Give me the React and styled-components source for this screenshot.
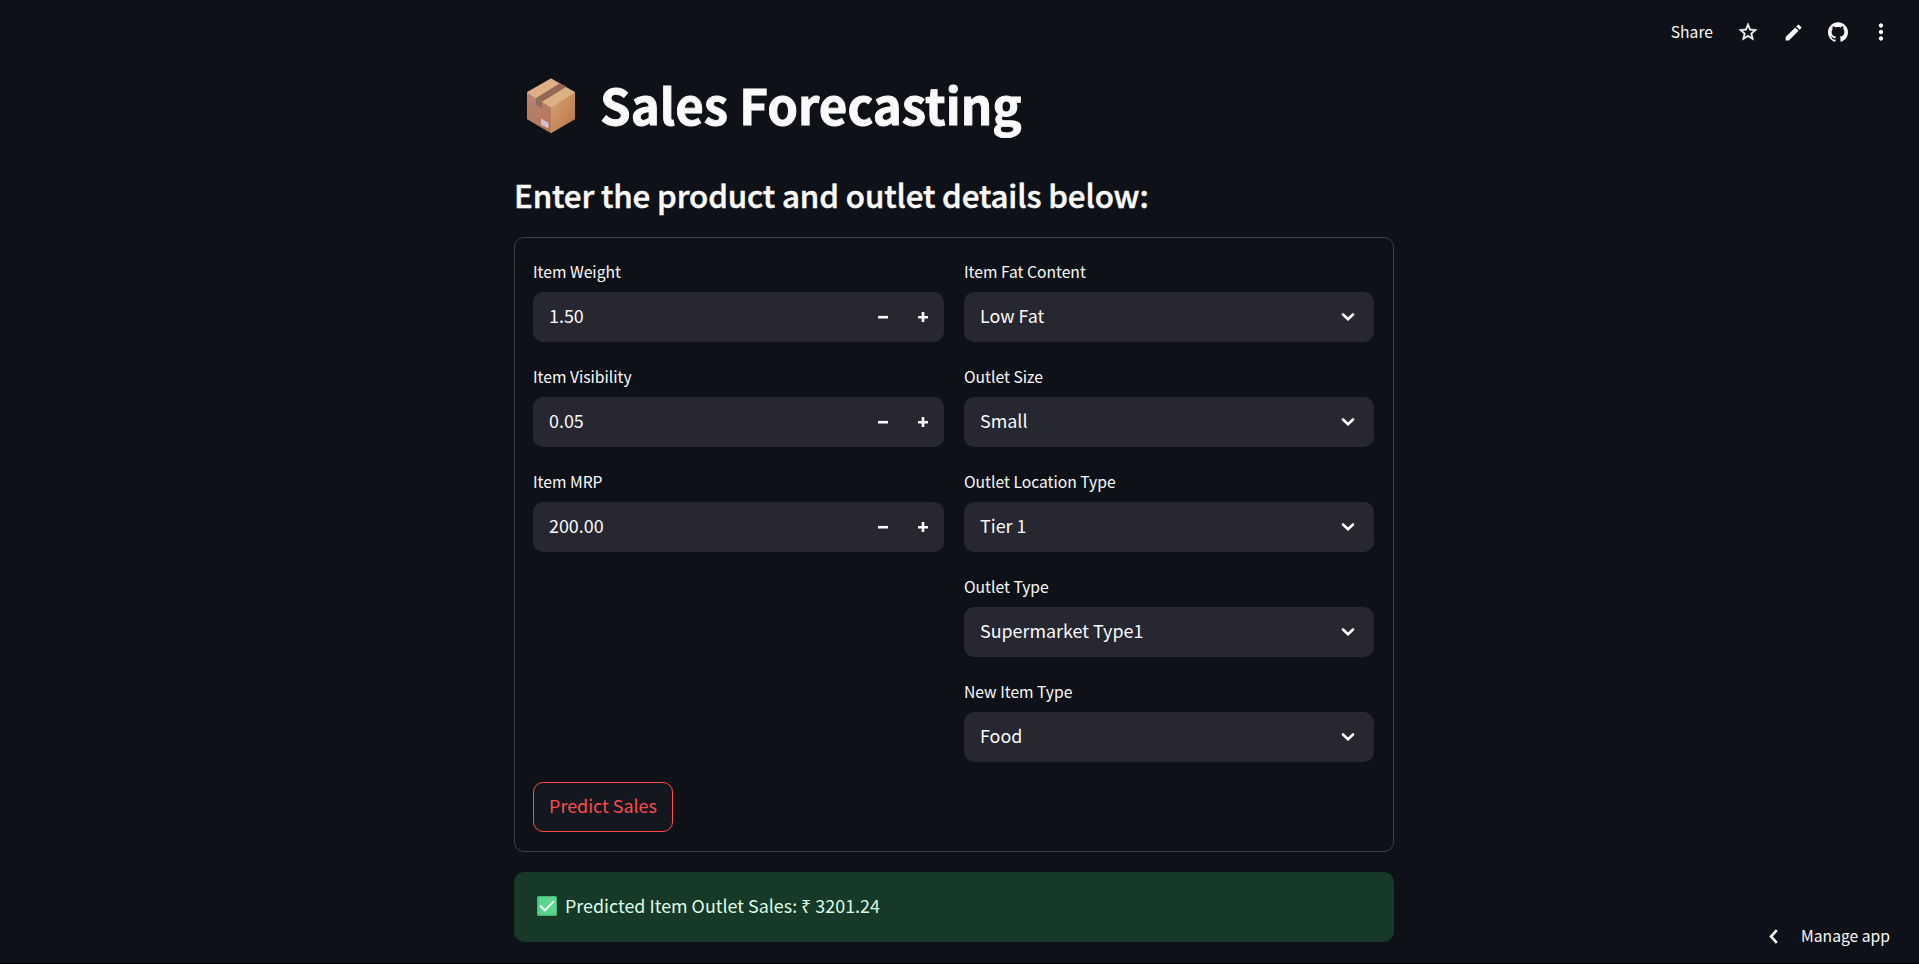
import React from "react";
import styled, { createGlobalStyle } from "styled-components";
import { MdEdit, MdMoreVert } from "react-icons/md";
import { SiGithub } from "react-icons/si";

const GlobalStyle = createGlobalStyle`
  * { box-sizing: border-box; }
  body {
    margin: 0;
    background: #0e1117;
    color: #fafafa;
    font-family: "Noto Sans CJK SC", "Noto Sans", sans-serif;
    overflow: hidden;
  }
`;

const Page = styled.div`
  display: flex;
  flex-direction: column;
  height: 964px;
  position: relative;
  border-bottom: 1px solid #000;
`;

const Toolbar = styled.header`
  display: flex;
  justify-content: flex-end;
  align-items: center;
  height: 64px;
  padding-right: 7px;
`;

const ToolText = styled.span`
  font-size: 15.67px;
  line-height: 20px;
  margin-right: 24px;
`;

const ToolIcon = styled.span`
  display: flex;
  justify-content: center;
  align-items: center;
  width: ${(p) => p.$w}px;
  height: 26px;
`;

const Scroller = styled.div`
  padding-right: 11px;
`;

const Main = styled.main`
  width: 880px;
  margin: 0 auto;
  display: flex;
  flex-direction: column;
`;

const Title = styled.h1`
  display: flex;
  align-items: center;
  margin: 0;
  padding: 0 0 4px 13px;
  height: 84px;
  font-size: 49.2px;
  font-weight: 700;
  line-height: 66px;
  white-space: nowrap;
  -webkit-text-stroke: 0.9px #fafafa;

  svg { margin: 3px 25px 0 0; }
`;

const Subtitle = styled.h3`
  margin: 24px 0 20px;
  font-size: 31.3px;
  font-weight: 500;
  line-height: 45px;
  letter-spacing: -0.12px;
  white-space: nowrap;
  -webkit-text-stroke: 0.5px #fafafa;
`;

const Form = styled.form`
  height: 615px;
  border: 1px solid #3d4045;
  border-radius: 10px;
  padding: 19px 19px 19px 18px;
  display: flex;
  flex-direction: column;
  justify-content: space-between;
`;

const Columns = styled.div`
  display: grid;
  grid-template-columns: 411px 410px;
  column-gap: 20px;
`;

const Column = styled.div`
  display: flex;
  flex-direction: column;
  gap: 20px;
`;

const Field = styled.div`
  height: 85px;
  display: flex;
  flex-direction: column;
  justify-content: space-between;
`;

const Label = styled.label`
  font-size: 15.67px;
  line-height: 30px;
`;

const Control = styled.div`
  display: flex;
  align-items: center;
  height: 50px;
  padding: 0 16px;
  background: #262730;
  border-radius: 10px;
`;

const Value = styled.span`
  flex: 1;
  font-size: 17.9px;
  line-height: 26px;
  padding-bottom: 4px;
`;

const Steps = styled.div`
  display: flex;
  gap: 30px;
`;

const Chevron = styled.svg`
  margin-right: 3px;
`;

const Submit = styled.button`
  width: 140px;
  height: 50px;
  padding: 0 0 4px;
  border: 1px solid #ff4b4b;
  border-radius: 10px;
  background: #131720;
  color: #ff4b4b;
  font-family: inherit;
  font-size: 17.9px;
`;

const Alert = styled.div`
  display: flex;
  align-items: center;
  height: 70px;
  margin-top: 20px;
  padding: 0 23px;
  border-radius: 10px;
  background: #173928;
  color: #dffde9;
  font-size: 17.9px;

  svg { margin: 0 8px 2px 0; }
  span { padding-bottom: 4px; }
`;

const Manage = styled.div`
  position: absolute;
  right: 29px;
  bottom: 15px;
  display: flex;
  align-items: center;
  font-size: 15.67px;
  line-height: 24px;

  svg { margin-right: 23px; }
`;

const StarIcon = () => (
  <svg width="22" height="22" viewBox="0 0 24 24">
    <path
      fill="#fafafa"
      stroke="#fafafa"
      strokeWidth="0.4"
      d="M22 9.24l-7.19-.62L12 2 9.19 8.63 2 9.24l5.46 4.73L5.82 21 12 17.27 18.18 21l-1.63-7.03L22 9.24zM12 15.4l-3.76 2.27 1-4.28-3.32-2.88 4.38-.38L12 6.1l1.71 4.04 4.38.38-3.32 2.88 1 4.28L12 15.4z"
    />
  </svg>
);

const PackageIcon = () => (
  <svg width="48" height="56" viewBox="0 0 48 60" preserveAspectRatio="none">
    <defs>
      <linearGradient id="left" x1="0" y1="0" x2="0.3" y2="1">
        <stop offset="0" stopColor="#b98575" />
        <stop offset="1" stopColor="#b57655" />
      </linearGradient>
      <linearGradient id="right" x1="0" y1="0" x2="1" y2="1">
        <stop offset="0" stopColor="#d6a27c" />
        <stop offset="0.5" stopColor="#c98c5c" />
        <stop offset="1" stopColor="#b6743d" />
      </linearGradient>
    </defs>
    <g stroke="none">
      <path d="M24 .5 48 15v29L24 59 0 44V15z" fill="#c48a62" />
      <path d="M0 15.5 24 31v28L0 44z" fill="url(#left)" />
      <path d="M48 15.5 24 31v28l24-15z" fill="url(#right)" />
      <path d="M24 .5 48 15.5 24 31.5 0 15.5z" fill="#ddb184" />
      <path d="M33 5.5 39.5 9.5 15 25.5 9 21.5z" fill="#936855" />
      <path d="M9 21.5 15 25.5V32.5L9 29z" fill="#8f6c68" />
      <path d="M14 43.5 21.5 48v6L14 50z" fill="#d2bed0" />
    </g>
  </svg>
);

const CheckIcon = () => (
  <svg width="20" height="20" viewBox="0 0 20 20">
    <rect width="20" height="20" rx="1.5" fill="#49b777" />
    <rect x="1.5" y="1" width="17.5" height="17.5" rx="1" fill="#59d68d" />
    <path d="m3.8 10.3 4.1 4.1 8.6-8.8" fill="none" stroke="#fff" strokeWidth="2" strokeLinecap="round" />
  </svg>
);

const numbers = [
  ["Item Weight", "1.50"],
  ["Item Visibility", "0.05"],
  ["Item MRP", "200.00"],
];

const selects = [
  ["Item Fat Content", "Low Fat"],
  ["Outlet Size", "Small"],
  ["Outlet Location Type", "Tier 1"],
  ["Outlet Type", "Supermarket Type1"],
  ["New Item Type", "Food"],
];

const NumberField = ({ label, value }) => (
  <Field>
    <Label>{label}</Label>
    <Control>
      <Value>{value}</Value>
      <Steps>
        <svg width="10" height="10" viewBox="0 0 10 10">
          <path d="M0 5.2h10" stroke="#fafafa" strokeWidth="2.6" />
        </svg>
        <svg width="10" height="10" viewBox="0 0 10 10">
          <path d="M0 5.2h10M5 0v10" stroke="#fafafa" strokeWidth="2.6" />
        </svg>
      </Steps>
    </Control>
  </Field>
);

const SelectField = ({ label, value }) => (
  <Field>
    <Label>{label}</Label>
    <Control>
      <Value>{value}</Value>
      <Chevron width="14" height="10" viewBox="0 0 14 10">
        <path d="m2 2.5 5 4.8 5-4.8" fill="none" stroke="#fafafa" strokeWidth="2.6" strokeLinecap="round" />
      </Chevron>
    </Control>
  </Field>
);

export default function App() {
  return (
    <Page>
      <GlobalStyle />
      <Toolbar>
        <ToolText>Share</ToolText>
        <ToolIcon $w={22}><StarIcon /></ToolIcon>
        <ToolIcon $w={68}><MdEdit size={21} /></ToolIcon>
        <ToolIcon $w={22}><SiGithub size={20} /></ToolIcon>
        <ToolIcon $w={63}><MdMoreVert size={26} /></ToolIcon>
      </Toolbar>
      <Scroller>
        <Main>
          <Title><PackageIcon />Sales Forecasting</Title>
          <Subtitle>Enter the product and outlet details below:</Subtitle>
          <Form>
            <Columns>
              <Column>
                {numbers.map(([l, v]) => <NumberField key={l} label={l} value={v} />)}
              </Column>
              <Column>
                {selects.map(([l, v]) => <SelectField key={l} label={l} value={v} />)}
              </Column>
            </Columns>
            <Submit type="button">Predict Sales</Submit>
          </Form>
          <Alert><CheckIcon /><span>Predicted Item Outlet Sales: ₹ 3201.24</span></Alert>
        </Main>
      </Scroller>
      <Manage>
        <svg width="9" height="15" viewBox="0 0 9 15">
          <path d="M7.8 1.2 2 7.5l5.8 6.3" fill="none" stroke="#fafafa" strokeWidth="2.6" />
        </svg>
        Manage app
      </Manage>
    </Page>
  );
}
